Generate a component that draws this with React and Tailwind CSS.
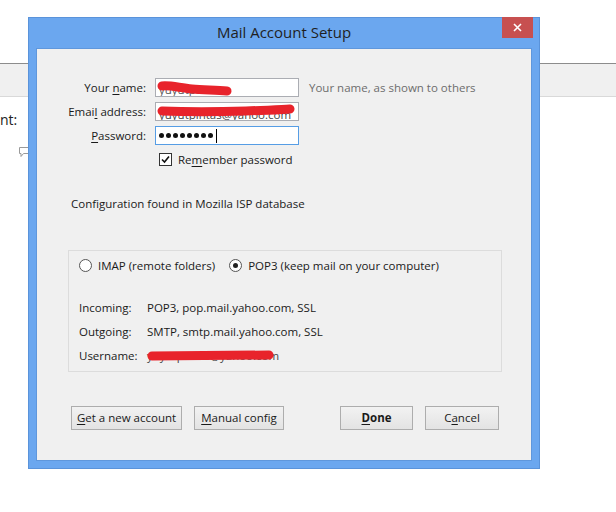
import React from "react";

const font = { fontFamily: '"Open Sans", "Noto Sans", sans-serif' };

const U = ({ children }) => <span className="underline underline-offset-2">{children}</span>;

const Btn = ({ children, className = "" }) => (
  <button className={`h-[24px] border border-[#adadad] bg-gradient-to-b from-[#f2f2f2] to-[#e3e3e3] text-[11.5px] text-[#1a1a1a] leading-none ${className}`}>
    {children}
  </button>
);

const Field = ({ label, focused, children }) => (
  <div className="flex items-center h-[19px]">
    <div className="w-[109px] text-right text-[11.5px] text-[#1a1a1a]">{label}</div>
    <div
      className={`relative ml-[9px] w-[144px] h-[19px] bg-white border overflow-hidden ${
        focused ? "border-[#569de5]" : "border-[#abadb3]"
      }`}
    >
      {children}
    </div>
  </div>
);

const Radio = ({ checked }) => (
  <span className="w-[13px] h-[13px] rounded-full border border-[#555] bg-white flex items-center justify-center">
    {checked && <span className="w-[5px] h-[5px] rounded-full bg-[#222]" />}
  </span>
);

const Scribble = ({ d, w, h }) => (
  <svg className="absolute left-0 top-0" width={w} height={h} viewBox={`0 0 ${w} ${h}`}>
    <path d={d} stroke="#e8232b" strokeWidth="9" fill="none" strokeLinecap="round" strokeLinejoin="round" />
  </svg>
);

export default function App() {
  return (
    <div className="relative w-[616px] h-[512px] bg-white overflow-hidden" style={font}>
      {/* background app, mostly covered */}
      <div className="pt-[63px]">
        <div className="h-[34px] bg-[#f0f0f0] border-t border-[#8c8c8c] border-b border-b-[#d9d9d9]" />
        <div className="mt-[16px] text-[14px] text-[#222] leading-none">nt:</div>
        <svg className="ml-[19px] mt-[20px]" width="10" height="11" viewBox="0 0 10 11">
          <path d="M0.5 0.5h9v6h-5l-2.5 3v-3h-1.5z" fill="#fff" stroke="#9a9a9a" />
        </svg>
      </div>

      {/* dialog window */}
      <div className="absolute left-[28px] top-[17px] w-[512px] h-[452px] bg-[#6ba7ef] border border-[#5a93da] flex flex-col">
        <div className="relative h-[30px] flex items-center justify-center">
          <span className="text-[15px] text-[#1f1f1f] -mt-[2px]">Mail Account Setup</span>
          <div className="absolute -top-px right-[6px] w-[31px] h-[21px] bg-[#c75050] flex items-center justify-center">
            <svg width="9" height="9" viewBox="0 0 9 9">
              <path d="M1 1L8 8M8 1L1 8" stroke="#fff" strokeWidth="1.6" />
            </svg>
          </div>
        </div>

        <div className="ml-[7px] mr-[7px] mb-[7px] flex-1 bg-[#f0f0f0] border border-[#5f97dc] flex flex-col">
          {/* account fields */}
          <div className="mt-[29px] flex flex-col gap-[5px]">
            <div className="flex items-center">
              <Field label={<>Your <U>n</U>ame:</>}>
                <span className="absolute left-[3px] top-[2px] text-[11.5px] text-[#555]">yuyutpintas</span>
                <Scribble w={144} h={19} d="M6 7 C14 6 24 9 36 10 C48 11 60 11 71 12" />
              </Field>
              <span className="ml-[10px] text-[11.5px] text-[#6d6d6d]">Your name, as shown to others</span>
            </div>
            <Field label={<>Emai<U>l</U> address:</>}>
              <span className="absolute left-[3px] top-[3px] text-[11.5px] text-[#444] whitespace-nowrap">yuyutpintas@yahoo.com</span>
              <Scribble w={144} h={19} d="M6 8 C30 9 60 9 90 8 C110 7 125 7 134 6" />
            </Field>
            <Field label={<><U>P</U>assword:</>} focused>
              <div className="flex items-center h-full pl-[3px] gap-[2px]">
                {[0, 1, 2, 3, 4, 5, 6, 7].map((i) => (
                  <span key={i} className="w-[5px] h-[5px] rounded-full bg-[#111]" />
                ))}
                <span className="ml-[1px] w-px h-[14px] bg-black" />
              </div>
            </Field>
          </div>

          <div className="mt-[6px] ml-[122px] flex items-center gap-[6px]">
            <span className="w-[13px] h-[13px] border border-[#333] bg-white flex items-center justify-center">
              <svg width="9" height="9" viewBox="0 0 9 9">
                <path d="M1 4.5L3.5 7L8 1.5" stroke="#111" strokeWidth="1.6" fill="none" />
              </svg>
            </span>
            <span className="text-[11.5px] text-[#1a1a1a]">Re<U>m</U>ember password</span>
          </div>

          <div className="mt-[27px] ml-[34px] text-[11.5px] text-[#1a1a1a]">Configuration found in Mozilla ISP database</div>

          {/* server settings group */}
          <div className="mt-[37px] ml-[31px] w-[434px] h-[122px] border border-[#dcdcdc] flex flex-col">
            <div className="mt-[6px] ml-[10px] flex items-center text-[11.5px] text-[#1a1a1a]">
              <Radio />
              <span className="ml-[6px]">IMAP (remote folders)</span>
              <span className="ml-[14px]"><Radio checked /></span>
              <span className="ml-[6px]">POP3 (keep mail on your computer)</span>
            </div>
            <div className="mt-[25px] ml-[10px] grid grid-cols-[68px_1fr] gap-y-[6px] text-[11.5px] text-[#1a1a1a] leading-[18px]">
              <span>Incoming:</span>
              <span>POP3, pop.mail.yahoo.com, SSL</span>
              <span>Outgoing:</span>
              <span>SMTP, smtp.mail.yahoo.com, SSL</span>
              <span>Username:</span>
              <span className="relative whitespace-nowrap text-[#444]">
                yuyutpintas@yahoo.com
                <Scribble w={130} h={18} d="M5 9 C40 9 80 8 122 8" />
              </span>
            </div>
          </div>

          {/* buttons */}
          <div className="mt-[34px] ml-[34px] flex items-center">
            <Btn className="w-[111px]"><U>G</U>et a new account</Btn>
            <Btn className="ml-[12px] w-[90px]"><U>M</U>anual config</Btn>
            <Btn className="ml-[56px] w-[73px] font-bold"><U>D</U>one</Btn>
            <Btn className="ml-[12px] w-[74px]">C<U>a</U>ncel</Btn>
          </div>
        </div>
      </div>
    </div>
  );
}
